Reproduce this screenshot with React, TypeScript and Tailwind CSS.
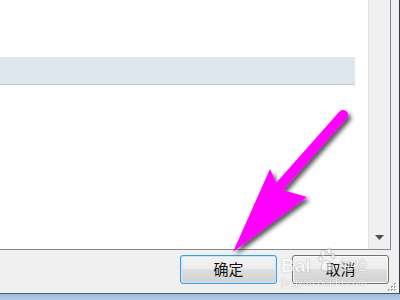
import React from "react";

function Arrow() {
  return (
    <svg className="absolute left-0 top-0 pointer-events-none" width="400" height="300" viewBox="0 0 400 300">
      <defs>
        <filter id="sh" x="-20%" y="-20%" width="140%" height="140%">
          <feDropShadow dx="3" dy="3" stdDeviation="2" floodColor="#000" floodOpacity="0.65" />
        </filter>
      </defs>
      <g filter="url(#sh)" fill="#ff00ff">
        <line x1="343" y1="115" x2="280" y2="186" stroke="#ff00ff" strokeWidth="10" strokeLinecap="round" />
        <polygon points="270,169 279,189 307,197 233,252" />
      </g>
    </svg>
  );
}

function Watermark() {
  return (
    <div className="absolute left-[281px] top-[245px] w-[95px] h-[45px] pointer-events-none opacity-60">
      <div
        className="absolute left-0 top-[11px] text-[19px] leading-none font-bold text-white"
        style={{ fontFamily: "Arial, 'Liberation Sans', sans-serif", textShadow: "0 0 1px #8a8a8a, 0 0 1px #8a8a8a" }}
      >
        Bai
      </div>
      <svg className="absolute left-[37px] top-[2px]" width="20" height="26" viewBox="0 0 20 26">
        <g fill="#fff" stroke="#9a9a9a" strokeWidth="0.8">
          <ellipse cx="5" cy="6" rx="2.2" ry="3" />
          <ellipse cx="11" cy="4" rx="2.2" ry="3" />
          <ellipse cx="2.5" cy="12" rx="2" ry="2.6" />
          <ellipse cx="15" cy="9" rx="2" ry="2.6" />
          <path d="M3 22 C3 15 8 12 10 14 C13 16 16 18 14 23 C12 25 5 25 3 22 Z" />
        </g>
      </svg>
      <div
        className="absolute left-[58px] top-[12px] text-[14px] leading-none text-white"
        style={{ fontFamily: "'Noto Sans CJK SC', sans-serif", textShadow: "0 0 1px #8a8a8a, 0 0 1px #8a8a8a" }}
      >
        经验
      </div>
      <div
        className="absolute left-0 top-[33px] text-[10px] leading-none text-white tracking-[0.3px]"
        style={{ fontFamily: "Arial, 'Liberation Sans', sans-serif", textShadow: "0 0 1px #9a9a9a, 0 0 1px #9a9a9a" }}
      >
        jingyan.baidu.com
      </div>
    </div>
  );
}

export default function App() {
  return (
    <div className="relative w-[400px] h-[300px] overflow-hidden bg-[#f0f0f0] flex flex-col">
      <div className="flex h-[250px]">
        <div className="flex w-[391px] h-[250px] border-r border-b border-[#828790] bg-white">
          <div className="flex-1 flex flex-col">
            <div className="h-[57px]" />
            <div className="h-[28px] w-[355px] bg-[#dce6ec] border-b border-[#c8c8c8]" />
          </div>
          <div className="w-[22px] bg-[#f0f0f0] border-l border-[#e3e3e3] flex flex-col justify-end items-center pb-[9px]">
            <svg width="9" height="5" viewBox="0 0 9 5">
              <polygon points="0,0 9,0 4.5,5" fill="#505050" />
            </svg>
          </div>
        </div>
        <div className="flex-1 bg-[#f0f0f0]" />
        <div className="w-[1px] bg-[#2f3d4c]" />
      </div>
      <div className="flex h-[43px]">
        <div className="flex-1 flex gap-[15px] pl-[180px] pt-[5px]">
          <div
            className="w-[97px] h-[29px] rounded-[3px] border border-[#3c9ee0] shadow-[inset_0_0_0_1px_#c6e8fb] bg-[linear-gradient(#f3f3f3,#ececec_50%,#dedede_50%,#d2d2d2)] flex items-center justify-center text-[15px] text-[#111]"
            style={{ fontFamily: "'Noto Sans CJK SC', sans-serif" }}
          >
            确定
          </div>
          <div
            className="w-[97px] h-[29px] rounded-[3px] border border-[#707070] shadow-[inset_0_0_0_1px_#fbfbfb] bg-[linear-gradient(#f3f3f3,#ececec_50%,#dedede_50%,#d2d2d2)] flex items-center justify-center text-[15px] text-[#111]"
            style={{ fontFamily: "'Noto Sans CJK SC', sans-serif" }}
          >
            取消
          </div>
        </div>
        <div className="w-[1px] bg-[#2f3d4c]" />
      </div>
      <div className="h-[1px] bg-[#4a5866]" />
      <div className="flex-1 bg-[linear-gradient(#9dbbdc,#b4cde8)]" />
      <svg className="absolute left-[386px] top-[283px]" width="11" height="11" viewBox="0 0 11 11">
        <g fill="#a0a0a0">
          <rect x="8" y="0" width="2" height="2" />
          <rect x="5" y="3" width="2" height="2" />
          <rect x="8" y="3" width="2" height="2" />
          <rect x="2" y="6" width="2" height="2" />
          <rect x="5" y="6" width="2" height="2" />
          <rect x="8" y="6" width="2" height="2" />
        </g>
        <g fill="#fff">
          <rect x="9" y="1" width="1" height="1" />
          <rect x="6" y="4" width="1" height="1" />
          <rect x="9" y="4" width="1" height="1" />
          <rect x="3" y="7" width="1" height="1" />
          <rect x="6" y="7" width="1" height="1" />
          <rect x="9" y="7" width="1" height="1" />
        </g>
      </svg>
      <Arrow />
      <Watermark />
    </div>
  );
}
